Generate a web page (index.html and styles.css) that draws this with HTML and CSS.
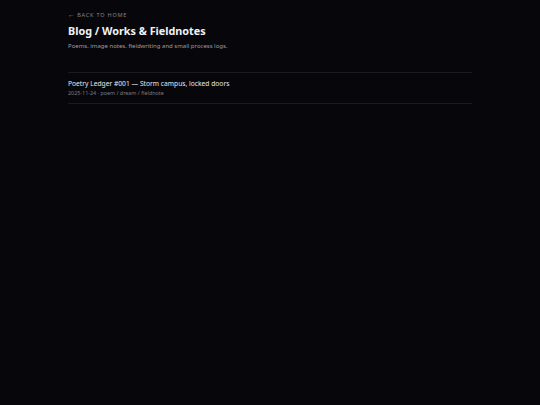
FILE: index.html
```html
<!DOCTYPE html>
<html lang="en">
<head>
    <meta charset="UTF-8">
    <meta name="viewport" content="width=device-width, initial-scale=1.0">
    <title>Blog / Works &amp; Fieldnotes</title>
    <link rel="stylesheet" href="styles.css">
</head>
<body>
    <main class="wrap">
        <a class="back-link" href="#"><span class="arrow">&larr;</span> Back to home</a>
        <h1>Blog / Works &amp; Fieldnotes</h1>
        <p class="intro">Poems, image notes, fieldwriting and small process logs.</p>

        <ul class="post-list">
            <li class="post-item">
                <a class="post-title" href="#">Poetry Ledger #001 — Storm campus, locked doors</a>
                <div class="post-meta">2025-11-24 · poem / dream / fieldnote</div>
            </li>
        </ul>
    </main>
</body>
</html>
```

FILE: styles.css
```css
body {
    font-family: 'Noto Sans', 'Open Sans', sans-serif;
    background-color: #07070b;
    margin: 0;
    padding: 0;
    color: #e6e6ea;
}

.wrap {
    width: 404px;
    margin: 0 auto;
    padding-top: 10px;
}

.back-link {
    display: block;
    font-size: 5.5px;
    letter-spacing: 0.8px;
    text-transform: uppercase;
    color: #85858f;
    text-decoration: none;
}

.back-link .arrow {
    font-size: 7px;
    letter-spacing: 0;
}

h1 {
    font-size: 10.8px;
    font-weight: 700;
    line-height: 1.3;
    margin: 5px 0 0;
    color: #f2f2f4;
}

.intro {
    font-size: 6px;
    color: #9c9ca4;
    margin: 4px 0 0;
}

.post-list {
    list-style: none;
    margin: 22px 0 0;
    padding: 0;
    border-top: 1px solid #1a1a20;
}

.post-item {
    padding: 6px 0 6px;
    border-bottom: 1px solid #1a1a20;
}

.post-title {
    display: block;
    font-size: 6.7px;
    font-weight: 400;
    color: #e8e8ec;
    text-decoration: none;
}

.post-meta {
    font-size: 5.4px;
    color: #7a7a84;
    margin-top: 1px;
}
```
